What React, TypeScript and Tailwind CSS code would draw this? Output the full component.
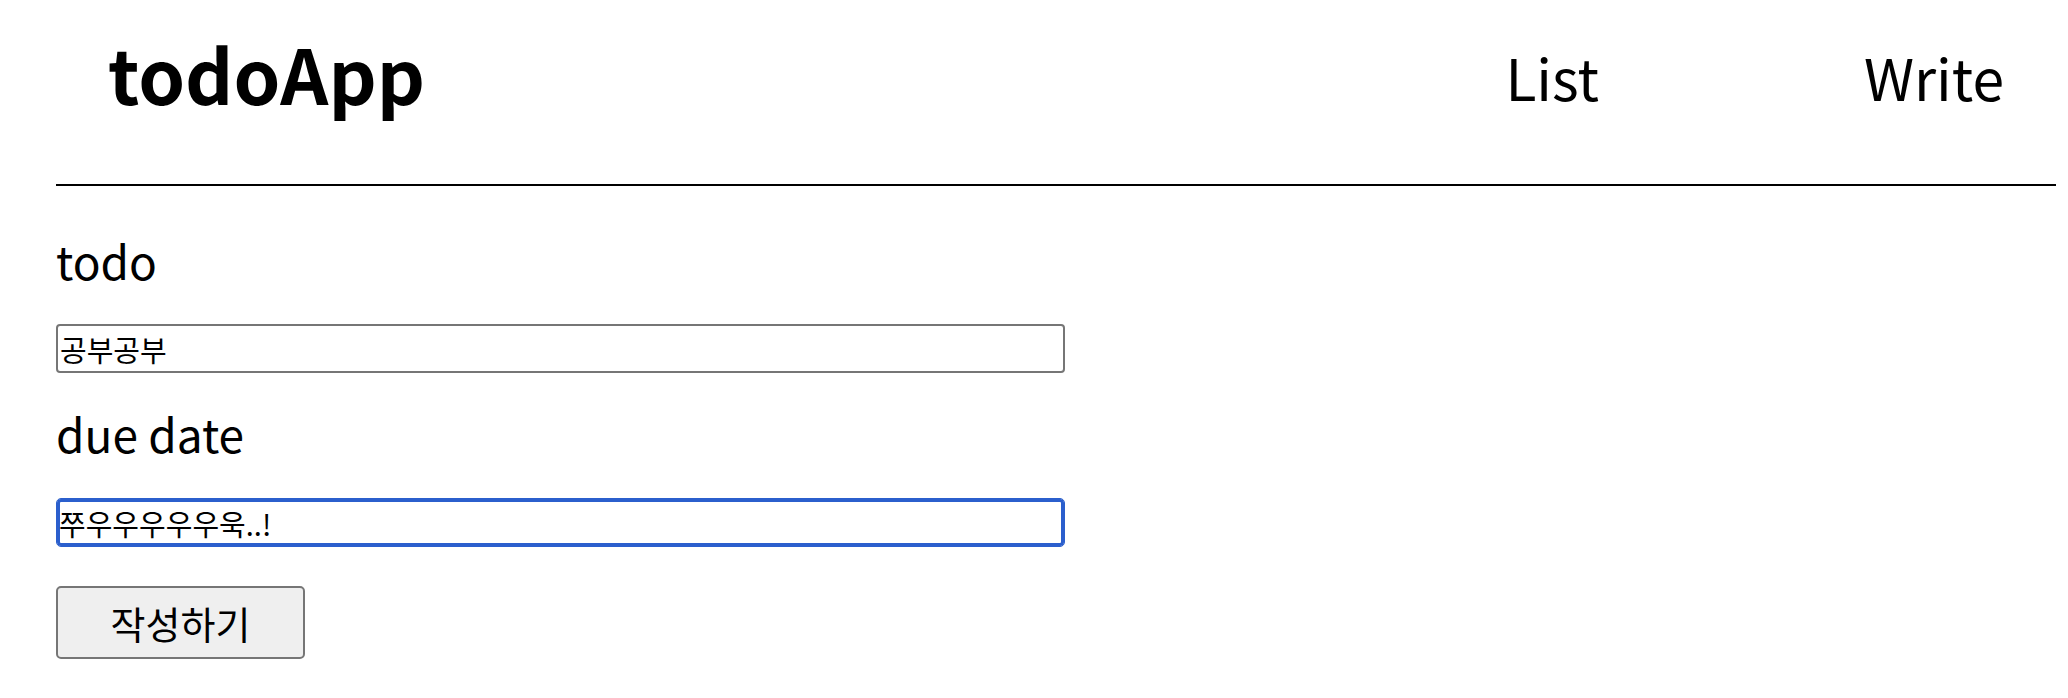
export default function App() {
  return (
    <div className="min-h-screen bg-white text-black font-['Noto_Sans_CJK_KR','Noto_Sans',sans-serif]">
      <div className="w-[2000px] ml-[56px]">
        {/* header */}
        <header className="flex items-start h-[184px] px-[52px]">
          <h1 className="mt-[35px] text-[75px] leading-none font-bold">todoApp</h1>
          <nav className="ml-auto mt-[48px] flex text-[57px] leading-none">
            <a href="#">List</a>
            <a href="#" className="ml-[265px]">Write</a>
          </nav>
        </header>
        <div className="h-[2px] bg-black" />

        {/* form */}
        <form className="flex flex-col items-start">
          <label className="mt-[51px] text-[46px] leading-none">todo</label>
          <input
            defaultValue="공부공부"
            className="mt-[41px] w-[1009px] h-[49px] px-[2px] text-[29px] border-2 border-[#767676] rounded-[4px] outline-none"
          />
          <label className="mt-[37px] text-[46px] leading-none">due date</label>
          <input
            defaultValue="쭈우우우우우욱..!"
            className="mt-[42px] w-[1009px] h-[49px] px-[2px] text-[29px] border border-[#2b5fcd] shadow-[inset_0_0_0_3px_#2b5fcd] rounded-[5px] outline-none"
          />
          <button
            type="button"
            className="mt-[39px] w-[249px] h-[73px] text-[38px] leading-none bg-[#efefef] border-2 border-[#767676] rounded-[5px]"
          >
            작성하기
          </button>
        </form>
      </div>
    </div>
  );
}
